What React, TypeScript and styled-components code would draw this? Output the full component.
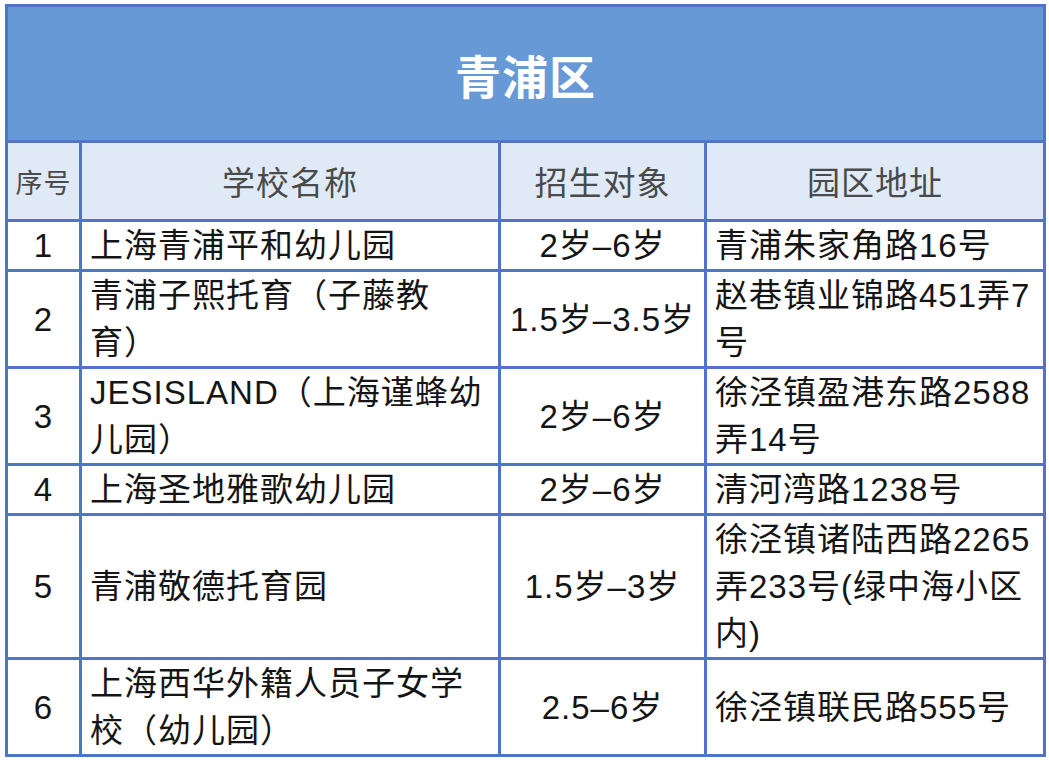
import React from "react";
import styled, { createGlobalStyle } from "styled-components";

const Global = createGlobalStyle`
  html, body { margin: 0; padding: 0; background: #ffffff; }
  body { font-family: "Liberation Sans", "Noto Sans CJK SC", sans-serif; }
`;

const Page = styled.div`
  padding: 4px 0 0 5px;
`;

const BORDER = "3px solid #4f74c9";

const Table = styled.table`
  border-collapse: separate;
  border-spacing: 0;
  table-layout: fixed;
  width: 1041px;
  border-top: ${BORDER};
  border-left: ${BORDER};
`;

const TitleCell = styled.th`
  height: 133px;
  padding: 0;
  background: #6699d6;
  border-right: ${BORDER};
  border-bottom: ${BORDER};
  color: #ffffff;
  font-family: "Noto Sans CJK SC", sans-serif;
  font-weight: 700;
  font-size: 46px;
  letter-spacing: 1px;
  text-align: center;
  vertical-align: middle;
`;

const HeadCell = styled.th<{ $small?: boolean }>`
  height: 76px;
  padding: 0;
  background: #dfeaf6;
  border-right: ${BORDER};
  border-bottom: ${BORDER};
  color: #4a4a4a;
  font-family: "Noto Sans CJK SC", sans-serif;
  font-weight: 400;
  font-size: ${(p) => (p.$small ? "27px" : "33px")};
  letter-spacing: 1px;
  text-align: center;
  vertical-align: middle;
`;

const Cell = styled.td<{ $align: "left" | "center" }>`
  padding: 0 ${(p) => (p.$align === "left" ? "0 0 8px" : "0")};
  border-right: ${BORDER};
  border-bottom: ${BORDER};
  color: #151515;
  font-size: 33px;
  line-height: 47px;
  letter-spacing: 1px;
  white-space: nowrap;
  text-align: ${(p) => p.$align};
  vertical-align: middle;
  overflow: hidden;
`;

type Row = { no: string; name: string[]; age: string; addr: string[] };

const rows: Row[] = [
  { no: "1", name: ["上海青浦平和幼儿园"], age: "2岁–6岁", addr: ["青浦朱家角路16号"] },
  { no: "2", name: ["青浦子熙托育（子藤教", "育）"], age: "1.5岁–3.5岁", addr: ["赵巷镇业锦路451弄7", "号"] },
  { no: "3", name: ["JESISLAND（上海谨蜂幼", "儿园）"], age: "2岁–6岁", addr: ["徐泾镇盈港东路2588", "弄14号"] },
  { no: "4", name: ["上海圣地雅歌幼儿园"], age: "2岁–6岁", addr: ["清河湾路1238号"] },
  { no: "5", name: ["青浦敬德托育园"], age: "1.5岁–3岁", addr: ["徐泾镇诸陆西路2265", "弄233号(绿中海小区", "内)"] },
  { no: "6", name: ["上海西华外籍人员子女学", "校（幼儿园）"], age: "2.5–6岁", addr: ["徐泾镇联民路555号"] },
];

const Lines: React.FC<{ lines: string[] }> = ({ lines }) => (
  <>
    {lines.map((l, i) => (
      <React.Fragment key={i}>
        {i > 0 && <br />}
        {l}
      </React.Fragment>
    ))}
  </>
);

export default function App() {
  return (
    <Page>
      <Global />
      <Table>
        <colgroup>
          <col style={{ width: 74 }} />
          <col style={{ width: 419 }} />
          <col style={{ width: 206 }} />
          <col style={{ width: 339 }} />
        </colgroup>
        <thead>
          <tr>
            <TitleCell colSpan={4}>青浦区</TitleCell>
          </tr>
          <tr>
            <HeadCell $small>序号</HeadCell>
            <HeadCell>学校名称</HeadCell>
            <HeadCell>招生对象</HeadCell>
            <HeadCell>园区地址</HeadCell>
          </tr>
        </thead>
        <tbody>
          {rows.map((r) => (
            <tr key={r.no}>
              <Cell $align="center">{r.no}</Cell>
              <Cell $align="left">
                <Lines lines={r.name} />
              </Cell>
              <Cell $align="center">{r.age}</Cell>
              <Cell $align="left">
                <Lines lines={r.addr} />
              </Cell>
            </tr>
          ))}
        </tbody>
      </Table>
    </Page>
  );
}
